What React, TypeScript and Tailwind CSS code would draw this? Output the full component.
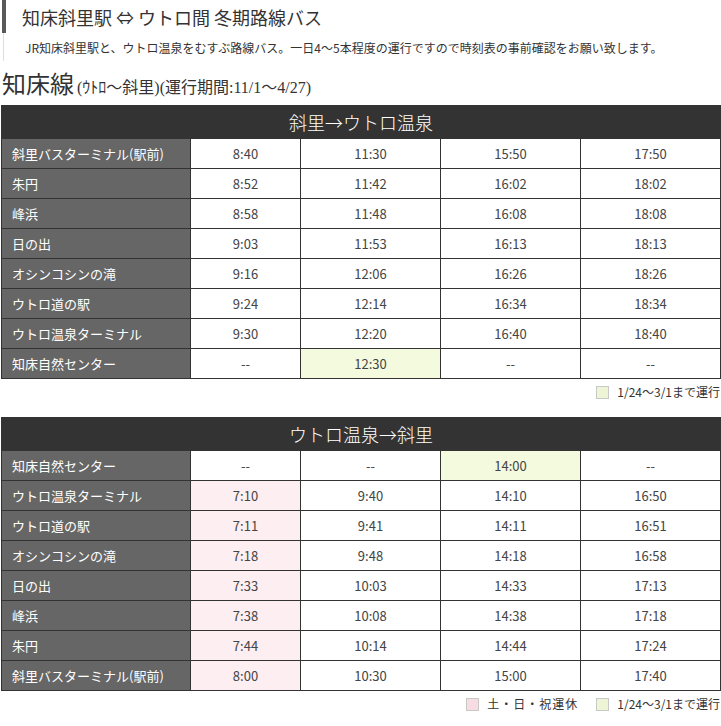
const jp = '[font-family:"Noto_Sans_CJK_JP","Noto_Sans",sans-serif]';

type Cell = { t: string; tone?: 'green' | 'pink' };
type Row = { stop: string; cells: Cell[] };

const outbound: Row[] = [
  { stop: '斜里バスターミナル(駅前)', cells: [{ t: '8:40' }, { t: '11:30' }, { t: '15:50' }, { t: '17:50' }] },
  { stop: '朱円', cells: [{ t: '8:52' }, { t: '11:42' }, { t: '16:02' }, { t: '18:02' }] },
  { stop: '峰浜', cells: [{ t: '8:58' }, { t: '11:48' }, { t: '16:08' }, { t: '18:08' }] },
  { stop: '日の出', cells: [{ t: '9:03' }, { t: '11:53' }, { t: '16:13' }, { t: '18:13' }] },
  { stop: 'オシンコシンの滝', cells: [{ t: '9:16' }, { t: '12:06' }, { t: '16:26' }, { t: '18:26' }] },
  { stop: 'ウトロ道の駅', cells: [{ t: '9:24' }, { t: '12:14' }, { t: '16:34' }, { t: '18:34' }] },
  { stop: 'ウトロ温泉ターミナル', cells: [{ t: '9:30' }, { t: '12:20' }, { t: '16:40' }, { t: '18:40' }] },
  { stop: '知床自然センター', cells: [{ t: '--' }, { t: '12:30', tone: 'green' }, { t: '--' }, { t: '--' }] },
];

const inbound: Row[] = [
  { stop: '知床自然センター', cells: [{ t: '--' }, { t: '--' }, { t: '14:00', tone: 'green' }, { t: '--' }] },
  { stop: 'ウトロ温泉ターミナル', cells: [{ t: '7:10', tone: 'pink' }, { t: '9:40' }, { t: '14:10' }, { t: '16:50' }] },
  { stop: 'ウトロ道の駅', cells: [{ t: '7:11', tone: 'pink' }, { t: '9:41' }, { t: '14:11' }, { t: '16:51' }] },
  { stop: 'オシンコシンの滝', cells: [{ t: '7:18', tone: 'pink' }, { t: '9:48' }, { t: '14:18' }, { t: '16:58' }] },
  { stop: '日の出', cells: [{ t: '7:33', tone: 'pink' }, { t: '10:03' }, { t: '14:33' }, { t: '17:13' }] },
  { stop: '峰浜', cells: [{ t: '7:38', tone: 'pink' }, { t: '10:08' }, { t: '14:38' }, { t: '17:18' }] },
  { stop: '朱円', cells: [{ t: '7:44', tone: 'pink' }, { t: '10:14' }, { t: '14:44' }, { t: '17:24' }] },
  { stop: '斜里バスターミナル(駅前)', cells: [{ t: '8:00', tone: 'pink' }, { t: '10:30' }, { t: '15:00' }, { t: '17:40' }] },
];

const toneBg = { green: 'bg-[#f3fadd]', pink: 'bg-[#fdeef1]' };

function Timetable({ title, rows }: { title: string; rows: Row[] }) {
  return (
    <table className="w-[720px] ml-px border-collapse border border-[#333] text-[13px]">
      <colgroup>
        <col className="w-[189px]" />
        <col className="w-[110px]" />
        <col className="w-[140px]" />
        <col className="w-[140px]" />
        <col className="w-[140px]" />
      </colgroup>
      <thead>
        <tr className="h-[33px] bg-[#333]">
          <th colSpan={5} className="border border-[#333] text-center text-[18px] font-light text-white leading-none">
            {title}
          </th>
        </tr>
      </thead>
      <tbody>
        {rows.map((r) => (
          <tr key={r.stop} className="h-[30px]">
            <td className="border border-[#333] bg-[#666] pl-[10px] text-white">{r.stop}</td>
            {r.cells.map((c, i) => (
              <td
                key={i}
                className={`border border-[#333] text-center text-[#444] ${c.tone ? toneBg[c.tone] : 'bg-white'}`}
              >
                {c.t}
              </td>
            ))}
          </tr>
        ))}
      </tbody>
    </table>
  );
}

function Legend({ pink }: { pink?: boolean }) {
  return (
    <div className="flex justify-end items-center gap-[4px] pr-[1px] text-[12px] text-[#333] h-[26px]">
      {pink && (
        <>
          <span className="w-[13px] h-[13px] border border-[#c8c8c8] bg-[#f7dde3]" />
          <span className="ml-[4px] mr-[14px] tracking-[1px]">土・日・祝運休</span>
        </>
      )}
      <span className="w-[13px] h-[13px] border border-[#c8c8c8] bg-[#eef5d6]" />
      <span className="ml-[4px]">1/24〜3/1まで運行</span>
    </div>
  );
}

export default function App() {
  return (
    <div className={`w-[721px] h-[726px] bg-white text-[#333] ${jp}`}>
      <div className="ml-[2px] flex">
        <div className="flex flex-col w-[4px]">
          <div className="h-[33px] bg-[#5a5a5a]" />
          <div className="h-[28px] w-[1px] ml-[1px] bg-[#ddd]" />
        </div>
        <div className="pl-[16px]">
          <h1 className="text-[18px] leading-[33px] font-normal pt-[1px]">知床斜里駅 ⇔ ウトロ間 冬期路線バス</h1>
          <p className="text-[12px] leading-[16px] pl-[3px] mt-[6px]">
            JR知床斜里駅と、ウトロ温泉をむすぶ路線バス。一日4〜5本程度の運行ですので時刻表の事前確認をお願い致します。
          </p>
        </div>
      </div>
      <h2 className='mt-[6px] pl-[2px] h-[38px] flex items-baseline [font-family:"Liberation_Serif","Noto_Sans_CJK_JP",serif]'>
        <span className="text-[24px]">知床線</span>
        <span className="text-[16px] ml-[3px]">(ｳﾄﾛ〜斜里)(運行期間:11/1〜4/27)</span>
      </h2>
      <Timetable title="斜里→ウトロ温泉" rows={outbound} />
      <Legend />
      <div className="h-[12px]" />
      <Timetable title="ウトロ温泉→斜里" rows={inbound} />
      <Legend pink />
    </div>
  );
}
